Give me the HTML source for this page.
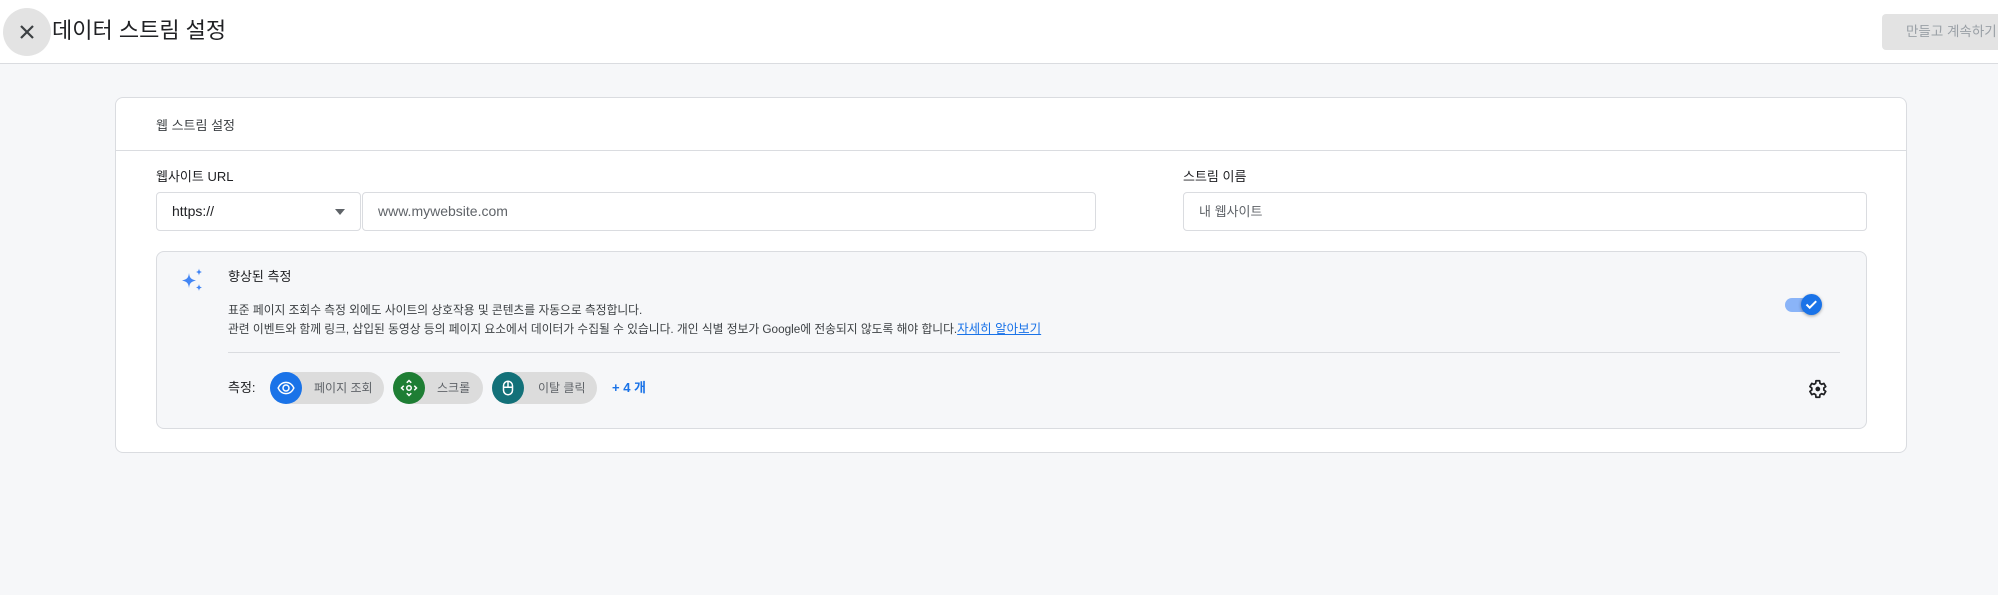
<!DOCTYPE html>
<html><head><meta charset="utf-8"><style>
*{box-sizing:border-box;margin:0;padding:0}
body{width:1998px;height:595px;background:#f6f7f9;font-family:"Liberation Sans","Noto Sans CJK KR",sans-serif;color:#202124;position:relative;overflow:hidden}
.abs{position:absolute}
.hdr{left:0;top:0;width:1998px;height:64px;background:#fff;border-bottom:1px solid #dadce0}
.close{left:3px;top:8px;width:48px;height:48px;border-radius:50%;background:#e3e3e3}
.title{left:52px;top:15px;font-size:22px;line-height:32px;color:#202124}
.btn{left:1882px;top:14px;width:130px;height:36px;background:#e3e3e3;border-radius:4px;font-size:13.5px;color:#9aa0a6;line-height:36px;padding-left:24px}
.card{left:115px;top:97px;width:1792px;height:356px;background:#fff;border:1px solid #dadce0;border-radius:8px}
.inp{background:#fff;border:1px solid #dadce0;border-radius:4px;height:39px;font-size:14px;line-height:37px;padding-left:15px}
.panel{left:156px;top:251px;width:1711px;height:178px;background:#f6f7f9;border:1px solid #dadce0;border-radius:8px}
.t13{font-size:13px}
.desc{font-size:11.75px;color:#3c4043;line-height:18px}
.chip{height:32px;border-radius:16px;background:#dcdcdc;font-size:12px;color:#5f6368;line-height:32px}
.ci{position:absolute;left:0;top:0;width:32px;height:32px;border-radius:50%;display:flex;align-items:center;justify-content:center}
</style></head><body>
<div class="abs hdr"></div>
<div class="abs close"><svg width="48" height="48" viewBox="0 0 48 48"><path d="M18 18L30 30M30 18L18 30" stroke="#3c4043" stroke-width="2.2"/></svg></div>
<div class="abs title">데이터 스트림 설정</div>
<div class="abs btn">만들고 계속하기</div>

<div class="abs card"></div>
<div class="abs t13" style="left:156px;top:117px;line-height:18px;color:#3c4043">웹 스트림 설정</div>
<div class="abs" style="left:116px;top:150px;width:1790px;height:1px;background:#dadce0"></div>
<div class="abs t13" style="left:156px;top:168px;line-height:18px">웹사이트 URL</div>
<div class="abs t13" style="left:1183px;top:168px;line-height:18px">스트림 이름</div>
<div class="abs inp" style="left:156px;top:192px;width:205px">https://<svg class="abs" style="left:177px;top:15px" width="12" height="8"><path d="M1 1h10L6 7z" fill="#5f6368"/></svg></div>
<div class="abs inp" style="left:362px;top:192px;width:734px;color:#5f6368">www.mywebsite.com</div>
<div class="abs inp" style="left:1183px;top:192px;width:684px;color:#5f6368;font-size:13px">내 웹사이트</div>

<div class="abs panel"></div>
<svg class="abs" style="left:181px;top:268px" width="24" height="24" viewBox="0 0 24 24"><path d="M8 5C8.7 10 9.8 11.3 15 12.5 9.8 13.7 8.7 15 8 20 7.3 15 6.2 13.7 1 12.5 6.2 11.3 7.3 10 8 5Z" fill="#4285f4"/><path d="M18 0.5C18.4 2.8 18.9 3.4 21 4 18.9 4.6 18.4 5.2 18 7.5 17.6 5.2 17.1 4.6 15 4 17.1 3.4 17.6 2.8 18 0.5Z" fill="#4285f4"/><path d="M18 16C18.4 18.3 18.9 18.9 21 19.5 18.9 20.1 18.4 20.7 18 23 17.6 20.7 17.1 20.1 15 19.5 17.1 18.9 17.6 18.3 18 16Z" fill="#4285f4"/></svg>
<div class="abs t13" style="left:228px;top:268px;line-height:18px">향상된 측정</div>
<div class="abs desc" style="left:228px;top:302px;white-space:nowrap">표준 페이지 조회수 측정 외에도 사이트의 상호작용 및 콘텐츠를 자동으로 측정합니다.<br>관련 이벤트와 함께 링크, 삽입된 동영상 등의 페이지 요소에서 데이터가 수집될 수 있습니다. 개인 식별 정보가 Google에 전송되지 않도록 해야 합니다.<span style="color:#1a73e8;text-decoration:underline;font-size:12.5px">자세히 알아보기</span></div>
<div class="abs" style="left:228px;top:352px;width:1612px;height:1px;background:#dadce0"></div>
<div class="abs t13" style="left:228px;top:379px;line-height:18px">측정:</div>

<div class="abs chip" style="left:270px;top:372px;width:114px;padding-left:44px">페이지 조회<div class="ci" style="background:#1a73e8"><svg width="18" height="18" viewBox="0 0 24 24"><path d="M1.5 12C4 6.5 8 4.5 12 4.5S20 6.5 22.5 12C20 17.5 16 19.5 12 19.5S4 17.5 1.5 12Z" fill="none" stroke="#fff" stroke-width="2"/><circle cx="12" cy="12" r="4" fill="none" stroke="#fff" stroke-width="2"/></svg></div></div>
<div class="abs chip" style="left:393px;top:372px;width:90px;padding-left:44px">스크롤<div class="ci" style="background:#1e7e34"><svg width="18" height="18" viewBox="0 0 24 24"><circle cx="12" cy="12" r="3" fill="none" stroke="#fff" stroke-width="2"/><path d="M9 5l3-3 3 3M9 19l3 3 3-3M5 9l-3 3 3 3M19 9l3 3-3 3" fill="none" stroke="#fff" stroke-width="2"/></svg></div></div>
<div class="abs chip" style="left:492px;top:372px;width:105px;padding-left:46px">이탈 클릭<div class="ci" style="background:#137179"><svg width="18" height="18" viewBox="0 0 24 24"><rect x="6" y="3" width="12" height="18" rx="6" fill="none" stroke="#fff" stroke-width="2"/><path d="M6 11h12M12 3v8" stroke="#fff" stroke-width="2"/></svg></div></div>
<div class="abs" style="left:612px;top:379px;font-size:13px;line-height:18px;color:#1a73e8;font-weight:bold">+ 4 개</div>

<div class="abs" style="left:1785px;top:298px;width:26px;height:14px;border-radius:7px;background:#8ab4f8"></div>
<div class="abs" style="left:1801px;top:294px;width:21px;height:21px;border-radius:50%;background:#1a73e8;box-shadow:0 1px 3px rgba(0,0,0,.35)"><svg width="21" height="21" viewBox="0 0 21 21"><path d="M5.5 10.5l3.2 3.2 6.5-6.5" fill="none" stroke="#fff" stroke-width="2"/></svg></div>
<svg class="abs" style="left:1806px;top:378px" width="22" height="22" viewBox="0 0 24 24"><path d="M19.4 13c.1-.3.1-.7.1-1s0-.7-.1-1l2.1-1.6-2-3.5-2.5 1c-.5-.4-1.1-.7-1.7-1L14.9 3h-4l-.4 2.9c-.6.3-1.200.6-1.7 1l-2.5-1-2 3.5L6.4 11c-.1.3-.1.7-.1 1s0 .7.1 1l-2.1 1.6 2 3.5 2.5-1c.5.4 1.1.7 1.7 1l.4 2.9h4l.4-2.9c.6-.3 1.2-.6 1.7-1l2.5 1 2-3.5z" fill="none" stroke="#202124" stroke-width="1.9" stroke-linejoin="round"/><circle cx="12.9" cy="12" r="2.6" fill="#202124"/></svg>
</body></html>
